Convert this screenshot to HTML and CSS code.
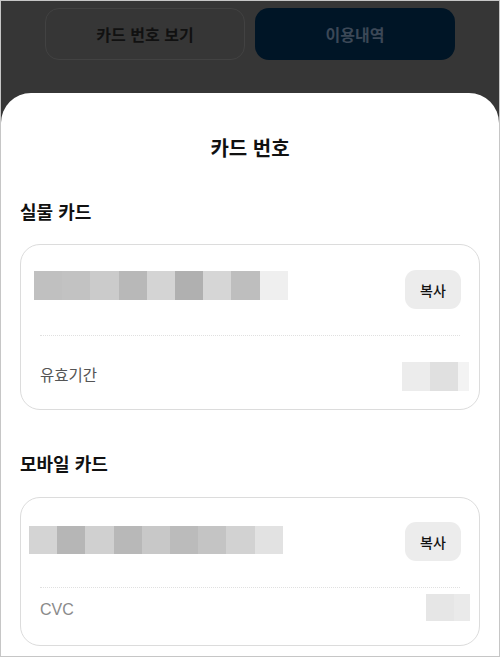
FILE: index.html
```html
<!DOCTYPE html>
<html lang="ko">
<head>
<meta charset="utf-8">
<link rel="stylesheet" href="styles.css">
</head>
<body>
<div class="frame">
  <div class="tabs">
    <div class="tab tab-outline">카드 번호 보기</div>
    <div class="tab tab-navy">이용내역</div>
  </div>
  <div class="sheet">
    <h1 class="title">카드 번호</h1>
    <h2 class="section">실물 카드</h2>
    <div class="card card-1">
      <div class="row-top">
        <div class="mask">
          <span style="background:#c0c0c0"></span><span style="background:#c2c2c2"></span><span style="background:#cbcbcb"></span><span style="background:#b8b8b8"></span><span style="background:#d4d4d4"></span><span style="background:#b0b0b0"></span><span style="background:#d6d6d6"></span><span style="background:#bebebe"></span><span style="background:#efefef"></span>
        </div>
        <button class="copy">복사</button>
      </div>
      <div class="dash"></div>
      <div class="row-bottom">
        <span class="label">유효기간</span>
        <div class="mask mask-side">
          <span style="background:#ececec"></span><span style="background:#e0e0e0"></span><span class="narrow" style="background:#f3f3f3"></span>
        </div>
      </div>
    </div>
    <h2 class="section section-2">모바일 카드</h2>
    <div class="card card-2">
      <div class="row-top">
        <div class="mask">
          <span style="background:#d4d4d4"></span><span style="background:#b6b6b6"></span><span style="background:#d0d0d0"></span><span style="background:#b8b8b8"></span><span style="background:#c8c8c8"></span><span style="background:#bbbbbb"></span><span style="background:#c4c4c4"></span><span style="background:#d2d2d2"></span><span style="background:#e2e2e2"></span>
        </div>
        <button class="copy">복사</button>
      </div>
      <div class="dash"></div>
      <div class="row-bottom">
        <span class="label">CVC</span>
        <div class="mask mask-side">
          <span style="background:#e6e6e6"></span><span class="narrow" style="background:#eaeaea"></span>
        </div>
      </div>
    </div>
  </div>
</div>
</body>
</html>
```
FILE: styles.css
```css
* { box-sizing: border-box; }
html, body { margin: 0; padding: 0; }
body {
  width: 500px;
  height: 657px;
  overflow: hidden;
  font-family: "Noto Sans CJK KR", "Noto Sans", sans-serif;
  background: #363636;
}
.frame {
  width: 500px;
  height: 657px;
  border: 1px solid #c6c6c6;
  background: #363636;
  display: flex;
  flex-direction: column;
  overflow: hidden;
}
.tabs {
  display: flex;
  justify-content: center;
  gap: 10px;
  padding-top: 7px;
  height: 92px;
}
.tab {
  width: 200px;
  height: 52px;
  border-radius: 14px;
  display: flex;
  align-items: center;
  justify-content: center;
  font-size: 16px;
  font-weight: 700;
}
.tab-outline {
  border: 1px solid #424242;
  color: #111;
}
.tab-navy {
  background: #001526;
  color: #3c4857;
}
.sheet {
  flex: 1;
  background: #fff;
  border-radius: 30px 30px 0 0;
  padding: 0 19px;
  display: flex;
  flex-direction: column;
}
.title {
  margin: 40px 0 0;
  text-align: center;
  font-size: 20px;
  font-weight: 700;
  color: #111;
  line-height: 30px;
}
.section {
  margin: 35px 0 0;
  font-size: 18px;
  font-weight: 700;
  color: #111;
  line-height: 26px;
}
.section-2 { margin-top: 40px; }
.card {
  margin-top: 20px;
  border: 1px solid #dcdcdc;
  border-radius: 20px;
  display: flex;
  flex-direction: column;
}
.card-1 { height: 166px; }
.card-2 { height: 149px; margin-top: 21px; }

.row-top {
  display: flex;
  align-items: flex-start;
  justify-content: space-between;
  padding: 0 18px 0 13px;
}
.card-1 .row-top { height: 90px; padding-top: 25px; }
.card-1 .row-top .mask { margin-top: 1px; }
.card-1 .row-top .mask span { height: 29px; }
.card-2 .row-top { height: 89px; padding-top: 24px; padding-left: 8px; }
.card-2 .row-top .mask { margin-top: 4px; }

.mask { display: flex; }
.mask span { display: block; width: 28.2px; height: 28px; }
.mask span.narrow { width: 11px; }
.card-2 .mask span.narrow { width: 16px; }
.copy {
  border: 0;
  background: #ececec;
  border-radius: 11px;
  width: 56px;
  height: 39px;
  font-family: inherit;
  font-size: 14px;
  font-weight: 500;
  color: #111;
  padding: 0;
}
.dash {
  margin-left: 19px;
  border-top: 1px dotted #e0e0e0;
  width: 420px;
}
.row-bottom {
  display: flex;
  align-items: flex-start;
  justify-content: space-between;
  padding: 0 10px 0 19px;
}
.card-1 .row-bottom { padding-top: 26px; }
.card-1 .label { margin-top: 1px; line-height: 22px; font-size: 15.5px; color: #555; }
.card-1 .mask-side span { height: 29px; }
.card-2 .row-bottom { padding-top: 6px; padding-right: 9px; }
.card-2 .label {
  margin-top: 6px;
  line-height: 20px;
  font-family: "Liberation Sans", "Noto Sans", sans-serif;
  font-size: 16px;
  color: #8a8a8a;
}
.card-2 .mask-side span { height: 27px; }
```
